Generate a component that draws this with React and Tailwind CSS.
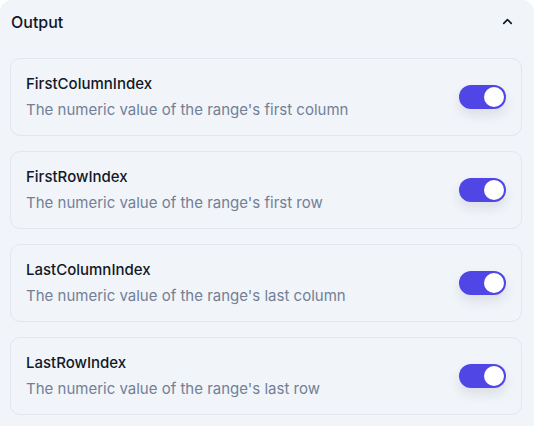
import React, { useState } from 'react'
import { ChevronUp } from 'lucide-react'

const fields = [
  { name: 'FirstColumnIndex', desc: "The numeric value of the range's first column" },
  { name: 'FirstRowIndex', desc: "The numeric value of the range's first row" },
  { name: 'LastColumnIndex', desc: "The numeric value of the range's last column" },
  { name: 'LastRowIndex', desc: "The numeric value of the range's last row" },
]

function Toggle({ on, onClick }) {
  return (
    <button
      onClick={onClick}
      className={`relative w-[47px] h-[24px] rounded-full shrink-0 shadow-[0_6px_12px_rgba(30,41,59,0.10)] ${on ? 'bg-[#4f46e5]' : 'bg-[#cbd5e1]'}`}
    >
      <span className={`absolute top-[2px] w-[20px] h-[20px] rounded-full bg-white ${on ? 'left-[25px]' : 'left-[2px]'}`} />
    </button>
  )
}

export default function App() {
  const [state, setState] = useState(fields.map(() => true))

  return (
    <div className="min-h-screen bg-white" style={{ fontFamily: 'Inter, "Noto Sans", sans-serif' }}>
      <div className="bg-[#f1f4f9] rounded-xl px-[10px] pb-6 min-h-[440px]">
        <div className="flex items-center justify-between h-[43px] pl-[1px] pr-[9px]">
          <span className="text-[16px] font-medium text-[#111827]">Output</span>
          <ChevronUp size={15} strokeWidth={2.6} className="text-[#111827]" />
        </div>
        <div className="mt-[15px] flex flex-col gap-[15px] w-[512px]">
          {fields.map((f, i) => (
            <div key={f.name} className="flex items-center justify-between border border-[#e2e7ef] rounded-[10px] px-[15px] py-[15px]">
              <div>
                <div className="text-[15px] leading-5 font-medium text-[#111827]">{f.name}</div>
                <div className="text-[15px] leading-5 mt-[6px] text-[#718096]">{f.desc}</div>
              </div>
              <Toggle on={state[i]} onClick={() => setState(s => s.map((v, j) => (j === i ? !v : v)))} />
            </div>
          ))}
        </div>
      </div>
    </div>
  )
}
